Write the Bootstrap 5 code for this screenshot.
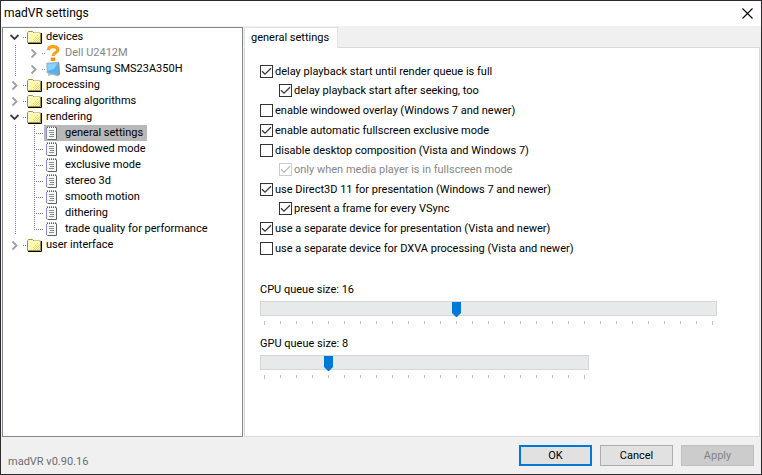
<!DOCTYPE html>
<html lang="en">
<head>
<meta charset="utf-8">
<meta name="viewport" content="width=device-width, initial-scale=1">
<title>madVR settings</title>
<link href="https://cdn.jsdelivr.net/npm/bootstrap@5.3.0/dist/css/bootstrap.min.css" rel="stylesheet">
<style>
body{font-family:Roboto,"Liberation Sans",sans-serif;font-size:11px;line-height:16px;color:#000;background:#f0f0f0}
.window{border:1px solid #2d2b2e}
.titlebar{height:25px;padding:0 8px 0 3px}
.titlebar h1{font-size:12px;line-height:24px}
button{font:inherit;color:inherit}
.close-btn{width:15px;height:24px}
.workarea{padding:1px 1px 0;gap:1px}
.tree-panel{width:241px;border:1px solid #828790;padding-top:1px}
.tree-row{height:16px;white-space:nowrap}
.twist{width:20px;height:16px;padding:0 0 0 6px;border:0;background:none}
.twist svg,.tree-icon{display:block}
.dots{height:1px;width:3px;margin-right:1px;background:repeating-linear-gradient(to right,#808080 0 1px,transparent 1px 2px)}
.tree-icon{width:16px;height:16px;margin-right:3px}
.tree-row a{color:#000;text-decoration:none}
.branch{padding-left:19px;background:repeating-linear-gradient(to bottom,#808080 0 1px,transparent 1px 2px) 12px 0/1px 100% no-repeat}
.leaves{padding-left:31px;background:
 repeating-linear-gradient(to bottom,#808080 0 1px,transparent 1px 2px) 12px 0/1px 110px no-repeat,
 repeating-linear-gradient(to bottom,#808080 0 1px,transparent 1px 2px) 31px 0/1px 105px no-repeat}
.leaves .dots{width:10px;margin:0}
.leaves .leaf{padding:0 4px 0 2px}
.leaves .leaf.active{background:#b8b8b8}
.tree-row a.off{color:#868686}
.tabs{border:0;border-bottom:1px solid #d9d9d9;height:21px}
.tabs .nav-link{height:21px;padding:0 8px 0 6px;line-height:19px;color:#000!important;border:1px solid #d9d9d9;border-bottom-color:#fff!important;border-radius:0;background:#fff!important;margin-bottom:-1px}
.pane{border:1px solid #d9d9d9;border-top:0;padding:14px 15px 0}
.opt{height:20px}
.opt.has-sub{height:19px}
.opt.sub{padding-left:19px}
.opt label{line-height:19px;padding-left:2px}
.opt input{appearance:none;width:13px;height:13px;margin:3px 0 0;border:1px solid #333;background:#fff no-repeat 0 0/11px 11px;flex:none}
.opt input:checked{background-image:url("data:image/svg+xml,%3Csvg xmlns='http://www.w3.org/2000/svg' viewBox='0 0 11 11'%3E%3Cpath d='M1 5.3 4 8.2 10 2.3' fill='none' stroke='%23333' stroke-width='1.2'/%3E%3C/svg%3E")}
.opt input:disabled{border-color:#ccc}
.opt input:checked:disabled{background-image:url("data:image/svg+xml,%3Csvg xmlns='http://www.w3.org/2000/svg' viewBox='0 0 11 11'%3E%3Cpath d='M1 5.3 4 8.2 10 2.3' fill='none' stroke='%23bbb' stroke-width='1.2'/%3E%3C/svg%3E")}
.opt input:disabled+label{color:#868686}
.sliders{padding-top:23px}
.queue{margin-bottom:11px;max-width:457px}
.queue.gpu{max-width:329px}
.queue label{display:block;margin-bottom:3px}
.queue input{appearance:none;display:block;width:100%;height:15px;margin:0;background:#e7eaea;box-shadow:inset 0 0 0 1px #d6d6d6}
.queue input::-webkit-slider-runnable-track{height:15px}
.queue input::-webkit-slider-thumb{appearance:none;width:9px;height:15px;margin-top:1px;background:#0078d7;clip-path:polygon(0 0,100% 0,100% 11px,5px 100%,4px 100%,0 11px)}
.ticks{height:4px;margin:5px 4px 0;background:
 linear-gradient(#c0c0c0,#c0c0c0) 0 0/1px 4px no-repeat,
 linear-gradient(#c0c0c0,#c0c0c0) 100% 0/1px 4px no-repeat,
 repeating-linear-gradient(to right,#c0c0c0 0 1px,transparent 1px 16px) 0 0/100% 3px no-repeat}
.footer-bar{height:37px;padding:8px 7px 8px 7px;gap:8px}
.version{color:#6d6d6d;line-height:16px;margin-bottom:-4px}
.dlg-btn{width:73px;height:21px;padding:0;font-size:11px;line-height:17px;border:1px solid #adadad;border-radius:0;background:#e1e1e1;color:#000}
.dlg-btn.default{border:2px solid #0078d7}
.dlg-btn:disabled{background:#ccc;border-color:#bfbfbf;color:#838383;opacity:1}
</style>
</head>
<body>
<svg class="d-none" aria-hidden="true">
 <symbol id="open" viewBox="0 0 12 16"><path d="M1.500 6 5.500 10 9.500 6" fill="none" stroke="#404040" stroke-width="1.8"/></symbol>
 <symbol id="shut" viewBox="0 0 12 16"><path d="M3.500 4.500 7.500 8.500 3.500 12.500" fill="none" stroke="#a0a0a0" stroke-width="1.8"/></symbol>
 <symbol id="folder" viewBox="0 0 16 16">
  <path d="M1 14.500h13.500V4" fill="none" stroke="#000"/>
  <path d="M.5 13.500v-10l1-1h4l1.500 1.500h6.500v9.500z" fill="#fffaa8" stroke="#a09530"/>
  <path d="M1.500 12.500v-8h11" fill="none" stroke="#fffde0"/>
  <path d="M4 12h1v1H4zM6 10h1v1H6zM8 8h1v1H8zM10 6h1v1h-1zM6 12h1v1H6zM8 10h1v1H8zM10 8h1v1h-1zM8 12h1v1H8zM10 10h1v1h-1zM12 8h1v1h-1zM10 12h1v1h-1zM12 10h1v1h-1zM12 12h1v1h-1zM7 11h1v1H7zM9 9h1v1H9zM9 11h1v1H9zM11 9h1v1h-1zM11 11h1v1h-1z" fill="#f3cf8a"/>
 </symbol>
 <symbol id="question" viewBox="0 0 16 16"><path d="M2.500 5.200C2.500 2.500 4.500 1.700 7 1.700s4.800.8 4.800 3.200C11.800 7.800 7 7.500 7 11" fill="none" stroke="#f9a11b" stroke-width="3.200"/><path d="M4.800 12.500h4.400V16H4.800z" fill="#f39208"/></symbol>
 <symbol id="monitor" viewBox="0 0 16 16"><path d="M2 10v5l5-1.500z" fill="#b8c2cb"/><path d="M.3 1.800 13 .8l.8 13.200-2.300 1.300L.7 12z" fill="#9db2c6"/><path d="M1.300 3 11.500 2.100 11.800 13.700 1.600 11z" fill="#4fb2f2"/><path d="M1.300 3 11.500 2.100 8 8 1.500 10z" fill="#8ad2fa"/><path d="M12 2l1.200-.5.600 12-1.500 1z" fill="#7b90a6"/></symbol>
 <symbol id="note" viewBox="0 0 16 16"><path d="M1.500 14.500h9v-12" fill="none" stroke="#5c6268"/><path d="M1 2h9v12H1z" fill="#f4f7f2"/><path d="M.5 3v11" stroke="#8f8bc4"/><path d="M1 1.500h9" stroke="#c4954a" stroke-dasharray="1 1"/><path d="M1 2.500h9" stroke="#6a5a3a" stroke-dasharray="1 1"/><path d="M3 5.500h5M3 7.500h5M4 9.500h4M3 11.500h5" stroke="#8b9090"/></symbol>
</svg>
<div class="window vh-100 d-flex flex-column overflow-hidden">
 <header class="titlebar bg-white d-flex justify-content-between flex-shrink-0">
  <h1 class="m-0 fw-normal">madVR settings</h1>
  <button type="button" class="close-btn btn p-0 border-0" aria-label="Close"><svg class="d-block ms-auto" width="11" height="24" viewBox="0 0 11 24"><path d="M.5 7.500l10 10M10.500 7.500l-10 10" stroke="#000" stroke-width="1.100"/></svg></button>
 </header>
 <main class="workarea d-flex flex-grow-1">
  <nav class="tree-panel bg-white flex-shrink-0" aria-label="Settings tree">
   <ul class="list-unstyled m-0">
    <li>
     <div class="tree-row d-flex align-items-center"><button type="button" class="twist" aria-label="Collapse devices"><svg width="12" height="16"><use href="#open"/></svg></button><i class="dots"></i><svg class="tree-icon"><use href="#folder"/></svg><a href="#">devices</a></div>
     <ul class="branch list-unstyled">
      <li class="tree-row d-flex align-items-center"><button type="button" class="twist" aria-label="Expand Dell U2412M"><svg width="12" height="16"><use href="#shut"/></svg></button><i class="dots"></i><svg class="tree-icon"><use href="#question"/></svg><a class="off" href="#">Dell U2412M</a></li>
      <li class="tree-row d-flex align-items-center"><button type="button" class="twist" aria-label="Expand Samsung SMS23A350H"><svg width="12" height="16"><use href="#shut"/></svg></button><i class="dots"></i><svg class="tree-icon"><use href="#monitor"/></svg><a href="#">Samsung SMS23A350H</a></li>
     </ul>
    </li>
    <li class="tree-row d-flex align-items-center"><button type="button" class="twist" aria-label="Expand processing"><svg width="12" height="16"><use href="#shut"/></svg></button><i class="dots"></i><svg class="tree-icon"><use href="#folder"/></svg><a href="#">processing</a></li>
    <li class="tree-row d-flex align-items-center"><button type="button" class="twist" aria-label="Expand scaling algorithms"><svg width="12" height="16"><use href="#shut"/></svg></button><i class="dots"></i><svg class="tree-icon"><use href="#folder"/></svg><a href="#">scaling algorithms</a></li>
    <li>
     <div class="tree-row d-flex align-items-center"><button type="button" class="twist" aria-label="Collapse rendering"><svg width="12" height="16"><use href="#open"/></svg></button><i class="dots"></i><svg class="tree-icon"><use href="#folder"/></svg><a href="#">rendering</a></div>
     <ul class="leaves list-unstyled">
      <li class="tree-row d-flex align-items-center"><i class="dots"></i><a class="leaf active d-flex" href="#" aria-current="page"><svg class="tree-icon"><use href="#note"/></svg>general settings</a></li>
      <li class="tree-row d-flex align-items-center"><i class="dots"></i><a class="leaf d-flex" href="#"><svg class="tree-icon"><use href="#note"/></svg>windowed mode</a></li>
      <li class="tree-row d-flex align-items-center"><i class="dots"></i><a class="leaf d-flex" href="#"><svg class="tree-icon"><use href="#note"/></svg>exclusive mode</a></li>
      <li class="tree-row d-flex align-items-center"><i class="dots"></i><a class="leaf d-flex" href="#"><svg class="tree-icon"><use href="#note"/></svg>stereo 3d</a></li>
      <li class="tree-row d-flex align-items-center"><i class="dots"></i><a class="leaf d-flex" href="#"><svg class="tree-icon"><use href="#note"/></svg>smooth motion</a></li>
      <li class="tree-row d-flex align-items-center"><i class="dots"></i><a class="leaf d-flex" href="#"><svg class="tree-icon"><use href="#note"/></svg>dithering</a></li>
      <li class="tree-row d-flex align-items-center"><i class="dots"></i><a class="leaf d-flex" href="#"><svg class="tree-icon"><use href="#note"/></svg>trade quality for performance</a></li>
     </ul>
    </li>
    <li class="tree-row d-flex align-items-center"><button type="button" class="twist" aria-label="Expand user interface"><svg width="12" height="16"><use href="#shut"/></svg></button><i class="dots"></i><svg class="tree-icon"><use href="#folder"/></svg><a href="#">user interface</a></li>
   </ul>
  </nav>
  <section class="flex-grow-1 d-flex flex-column">
   <ul class="nav nav-tabs tabs flex-shrink-0"><li class="nav-item"><a class="nav-link active" href="#" aria-current="page">general settings</a></li></ul>
   <form class="pane bg-white flex-grow-1">
    <div class="opt has-sub d-flex align-items-start"><input type="checkbox" id="o1" checked><label for="o1">delay playback start until render queue is full</label></div>
    <div class="opt sub d-flex align-items-start"><input type="checkbox" id="o2" checked><label for="o2">delay playback start after seeking, too</label></div>
    <div class="opt d-flex align-items-start"><input type="checkbox" id="o3"><label for="o3">enable windowed overlay (Windows 7 and newer)</label></div>
    <div class="opt d-flex align-items-start"><input type="checkbox" id="o4" checked><label for="o4">enable automatic fullscreen exclusive mode</label></div>
    <div class="opt has-sub d-flex align-items-start"><input type="checkbox" id="o5"><label for="o5">disable desktop composition (Vista and Windows 7)</label></div>
    <div class="opt sub d-flex align-items-start"><input type="checkbox" id="o6" checked disabled><label for="o6">only when media player is in fullscreen mode</label></div>
    <div class="opt has-sub d-flex align-items-start"><input type="checkbox" id="o7" checked><label for="o7">use Direct3D 11 for presentation (Windows 7 and newer)</label></div>
    <div class="opt sub d-flex align-items-start"><input type="checkbox" id="o8" checked><label for="o8">present a frame for every VSync</label></div>
    <div class="opt d-flex align-items-start"><input type="checkbox" id="o9" checked><label for="o9">use a separate device for presentation (Vista and newer)</label></div>
    <div class="opt d-flex align-items-start"><input type="checkbox" id="o10"><label for="o10">use a separate device for DXVA processing (Vista and newer)</label></div>
    <div class="sliders">
     <div class="queue"><label for="cpu">CPU queue size: 16</label><input type="range" id="cpu" min="4" max="32" value="16"><div class="ticks"></div></div>
     <div class="queue gpu"><label for="gpu">GPU queue size: 8</label><input type="range" id="gpu" min="4" max="24" value="8"><div class="ticks"></div></div>
    </div>
   </form>
  </section>
 </main>
 <footer class="footer-bar d-flex flex-shrink-0">
  <span class="version me-auto align-self-end">madVR v0.90.16</span>
  <button type="button" class="btn dlg-btn default">OK</button>
  <button type="button" class="btn dlg-btn">Cancel</button>
  <button type="button" class="btn dlg-btn" disabled>Apply</button>
 </footer>
</div>
<script src="https://cdn.jsdelivr.net/npm/bootstrap@5.3.0/dist/js/bootstrap.bundle.min.js"></script>
</body>
</html>
